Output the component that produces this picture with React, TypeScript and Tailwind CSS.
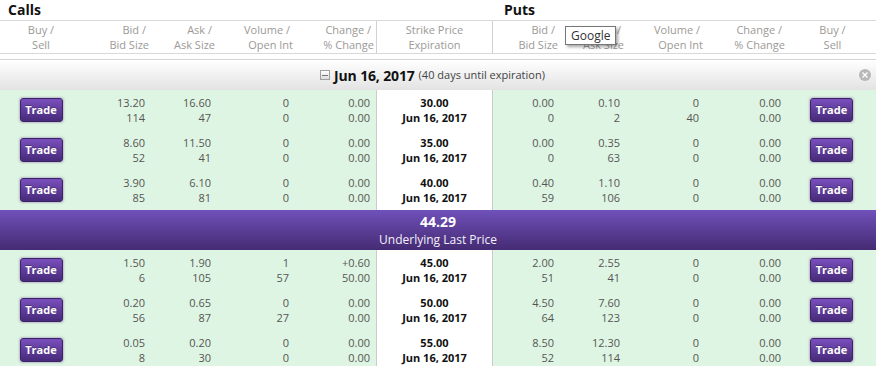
import React from "react";

type Row = {
  cb: [string, string];
  ca: [string, string];
  cv: [string, string];
  cc: [string, string];
  strike: string;
  pb: [string, string];
  pa: [string, string];
  pv: [string, string];
  pc: [string, string];
};

const above: Row[] = [
  { cb: ["13.20", "114"], ca: ["16.60", "47"], cv: ["0", "0"], cc: ["0.00", "0.00"], strike: "30.00", pb: ["0.00", "0"], pa: ["0.10", "2"], pv: ["0", "40"], pc: ["0.00", "0.00"] },
  { cb: ["8.60", "52"], ca: ["11.50", "41"], cv: ["0", "0"], cc: ["0.00", "0.00"], strike: "35.00", pb: ["0.00", "0"], pa: ["0.35", "63"], pv: ["0", "0"], pc: ["0.00", "0.00"] },
  { cb: ["3.90", "85"], ca: ["6.10", "81"], cv: ["0", "0"], cc: ["0.00", "0.00"], strike: "40.00", pb: ["0.40", "59"], pa: ["1.10", "106"], pv: ["0", "0"], pc: ["0.00", "0.00"] },
];

const below: Row[] = [
  { cb: ["1.50", "6"], ca: ["1.90", "105"], cv: ["1", "57"], cc: ["+0.60", "50.00"], strike: "45.00", pb: ["2.00", "51"], pa: ["2.55", "41"], pv: ["0", "0"], pc: ["0.00", "0.00"] },
  { cb: ["0.20", "56"], ca: ["0.65", "87"], cv: ["0", "27"], cc: ["0.00", "0.00"], strike: "50.00", pb: ["4.50", "64"], pa: ["7.60", "123"], pv: ["0", "0"], pc: ["0.00", "0.00"] },
  { cb: ["0.05", "8"], ca: ["0.20", "30"], cv: ["0", "0"], cc: ["0.00", "0.00"], strike: "55.00", pb: ["8.50", "52"], pa: ["12.30", "114"], pv: ["0", "0"], pc: ["0.00", "0.00"] },
];

const GRID =
  "grid grid-cols-[82px_68px_66px_78px_82px_117px_66px_66px_79px_83px_89px]";

function TradeButton() {
  return (
    <div className="flex h-[24px] w-[43px] items-center justify-center rounded-[3px] border border-[#3b2465] bg-linear-to-b from-[#7a4fbd] to-[#472a7a] text-[11px] font-bold text-white shadow-[0_0_2px_1px_rgba(110,80,150,0.35)] [text-shadow:0_-1px_0_rgba(0,0,0,0.3)]">
      Trade
    </div>
  );
}

function Num({ v, pr }: { v: [string, string]; pr: string }) {
  return (
    <div className={`flex flex-col justify-center text-right leading-[15px] text-[#555] ${pr}`}>
      <span>{v[0]}</span>
      <span>{v[1]}</span>
    </div>
  );
}

function DataRow({ r }: { r: Row }) {
  return (
    <div className={`${GRID} h-10 bg-[#dff5e3] text-[11px]`}>
      <div className="flex items-center justify-center">
        <TradeButton />
      </div>
      <Num v={r.cb} pr="pr-[5px]" />
      <Num v={r.ca} pr="pr-[5px]" />
      <Num v={r.cv} pr="pr-[5px]" />
      <Num v={r.cc} pr="pr-[6px]" />
      <div className="flex flex-col justify-center border-x border-[#cccccc] bg-white text-center font-bold leading-[15px] text-[#111]">
        <span>{r.strike}</span>
        <span>Jun 16, 2017</span>
      </div>
      <Num v={r.pb} pr="pr-[5px]" />
      <Num v={r.pa} pr="pr-[5px]" />
      <Num v={r.pv} pr="pr-[5px]" />
      <Num v={r.pc} pr="pr-[6px]" />
      <div className="flex items-center justify-center">
        <TradeButton />
      </div>
    </div>
  );
}

function HeadR({ a, b, pr }: { a: string; b: string; pr: string }) {
  return (
    <div className={`flex flex-col text-right leading-[15px] ${pr}`}>
      <span className="mr-[3px]">{a}</span>
      <span>{b}</span>
    </div>
  );
}

function HeadC({ a, b, cls = "" }: { a: string; b: string; cls?: string }) {
  return (
    <div className={`flex flex-col text-center leading-[15px] ${cls}`}>
      <span>{a}</span>
      <span>{b}</span>
    </div>
  );
}

export default function App() {
  return (
    <div
      className="relative h-[366px] w-[876px] overflow-hidden bg-white"
      style={{ fontFamily: "'Open Sans', 'Noto Sans', sans-serif" }}
    >
      {/* Titles */}
      <div className={`${GRID} h-[20px] text-[14px] font-bold leading-[20px] text-[#111]`}>
        <div className="col-span-6 pl-[8px]">Calls</div>
        <div className="col-span-5 pl-[11px]">Puts</div>
      </div>

      {/* Column headers */}
      <div className={`${GRID} border-y border-[#d9d9d9] py-[1px] text-[11px] text-[#9c9996]`}>
        <HeadC a="Buy /" b="Sell" />
        <HeadR a="Bid /" b="Bid Size" pr="pr-[1px]" />
        <HeadR a="Ask /" b="Ask Size" pr="pr-[1px]" />
        <HeadR a="Volume /" b="Open Int" pr="pr-[1px]" />
        <HeadR a="Change /" b="% Change" pr="pr-[2px]" />
        <HeadC a="Strike Price" b="Expiration" cls="border-x border-[#d0d0d0] -my-[1px] py-[1px]" />
        <HeadR a="Bid /" b="Bid Size" pr="pr-[1px]" />
        <HeadR a="Ask /" b="Ask Size" pr="pr-[1px]" />
        <HeadR a="Volume /" b="Open Int" pr="pr-[1px]" />
        <HeadR a="Change /" b="% Change" pr="pr-[2px]" />
        <HeadC a="Buy /" b="Sell" cls="pl-[2px]" />
      </div>

      {/* Expiration bar */}
      <div className="mt-[5px] flex h-[31px] items-center justify-center border-t border-[#d4d4d4] bg-linear-to-b from-white to-[#e3e3e3]">
        <div className="relative flex w-full items-center justify-center">
          <div className="mr-[11px] flex items-center">
            <span className="mr-[4px] flex h-[10px] w-[10px] items-center justify-center border border-[#a0a0a0] bg-linear-to-b from-white to-[#dcdcdc]">
              <span className="h-[1px] w-[6px] bg-[#777]" />
            </span>
            <span className="text-[14px] font-bold tracking-[-0.15px] text-[#111]">Jun 16, 2017</span>
            <span className="ml-[4px] text-[11px] text-[#444]">(40 days until expiration)</span>
          </div>
          <span className="absolute right-[5px] flex h-[12px] w-[12px] items-center justify-center rounded-full bg-[#b8b8b8]">
            <svg width="6" height="6" viewBox="0 0 6 6">
              <path d="M0.5 0.5 L5.5 5.5 M5.5 0.5 L0.5 5.5" stroke="white" strokeWidth="1.3" />
            </svg>
          </span>
        </div>
      </div>

      {above.map((r, i) => (
        <DataRow key={`a${i}`} r={r} />
      ))}

      {/* Underlying */}
      <div className="flex h-10 flex-col items-center justify-center bg-linear-to-b from-[#7051bb] to-[#452b73] text-white">
        <span className="text-[14px] font-bold leading-[18px]">44.29</span>
        <span className="text-[12px] leading-[17px] text-[#f4f0fa]">Underlying Last Price</span>
      </div>

      {below.map((r, i) => (
        <DataRow key={`b${i}`} r={r} />
      ))}

      {/* Tooltip */}
      <div className="absolute left-[565px] top-[26px] border border-[#767676] bg-white px-[5px] text-[12px] leading-[17px] text-[#333] shadow-[2px_2px_3px_rgba(0,0,0,0.35)]">
        Google
      </div>
    </div>
  );
}
